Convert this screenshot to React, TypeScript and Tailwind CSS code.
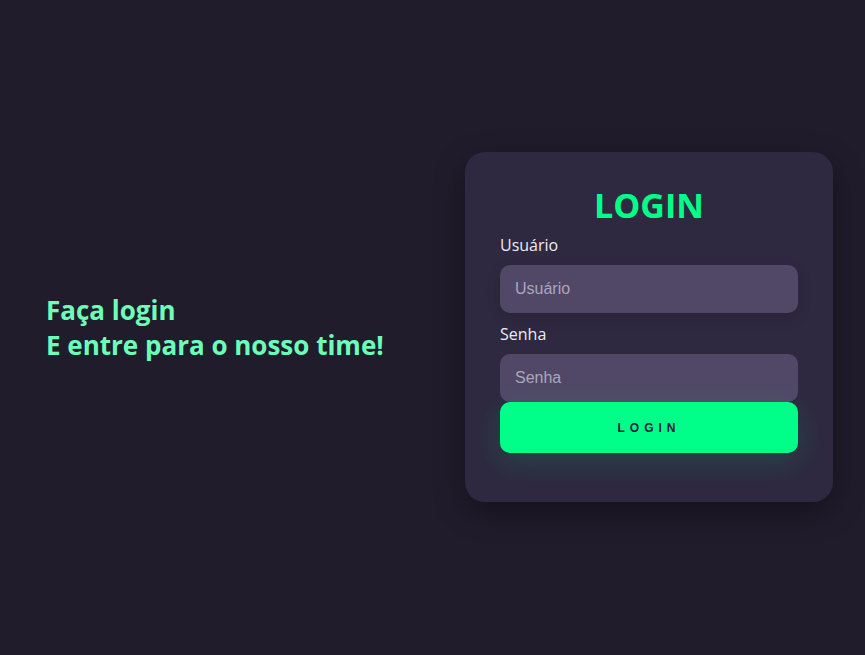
export default function App() {
  return (
    <div className="flex h-[655px] w-full items-center justify-between bg-[#201c2c] pl-[46px] pr-[32px] font-['Open_Sans',sans-serif]">
      <div className="mt-[1px] text-[26px] font-bold leading-[35px] text-[#6cffb8]">
        <p>Faça login</p>
        <p>E entre para o nosso time!</p>
      </div>

      <div className="mb-[1px] flex h-[350px] w-[368px] flex-col rounded-[20px] bg-[#2e2940] px-[35px] pt-[29px] shadow-[0_10px_30px_rgba(0,0,0,0.35)]">
        <h1 className="text-center text-[34px] font-bold leading-[48px] text-[#00ff88]">LOGIN</h1>

        <label className="mt-[4px] text-[16px] leading-[24px] text-[#ecebf5]">Usuário</label>
        <input
          placeholder="Usuário"
          className="mt-[8px] h-[48px] w-full rounded-[10px] bg-[#514868] px-[15px] font-['Liberation_Sans',sans-serif] text-[16px] text-white outline-none placeholder:text-[#a9a6bd] shadow-[0_4px_14px_rgba(0,0,0,0.15)]"
        />

        <label className="mt-[9px] text-[16px] leading-[24px] text-[#ecebf5]">Senha</label>
        <input
          type="password"
          placeholder="Senha"
          className="mt-[8px] h-[48px] w-full rounded-[10px] bg-[#514868] px-[15px] font-['Liberation_Sans',sans-serif] text-[16px] text-white outline-none placeholder:text-[#a9a6bd]"
        />

        <button className="h-[51px] w-full rounded-[10px] bg-[#00ff88] font-['Liberation_Sans',sans-serif] text-[12px] font-bold tracking-[5px] text-[#1e1640] shadow-[0_8px_30px_rgba(0,255,136,0.15)]">
          LOGIN
        </button>
      </div>
    </div>
  );
}
